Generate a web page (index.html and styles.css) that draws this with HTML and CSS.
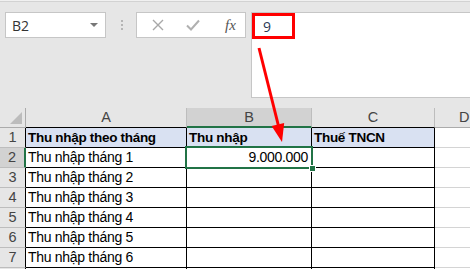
FILE: index.html
```html
<!DOCTYPE html>
<html lang="en">
<head>
    <meta charset="UTF-8">
    <title>Thu nhập</title>
    <link rel="stylesheet" href="styles.css">
</head>
<body>
    <div class="app">
        <div class="topline"></div>
        <div class="toolbar">
            <div class="namebox">
                <span>B2</span>
                <span class="drop"></span>
            </div>
            <div class="dots"><i></i><i></i><i></i></div>
            <div class="fbuttons">
                <svg width="12" height="12" viewBox="0 0 12 12"><path d="M1 1L11 11M11 1L1 11" stroke="#a8a8a8" stroke-width="1.4" fill="none"/></svg>
                <svg width="14" height="12" viewBox="0 0 14 12"><path d="M1 6.5L5 10.5L13 1.5" stroke="#b0b0b0" stroke-width="2" fill="none"/></svg>
                <span class="fx">fx</span>
            </div>
            <div class="formula">
                <div class="hl">9</div>
            </div>
        </div>

        <div class="sheet">
            <div class="ch corner"><span class="tri"></span></div>
            <div class="ch">A</div>
            <div class="ch sel">B</div>
            <div class="ch">C</div>
            <div class="ch last">D</div>

            <div class="rh">1</div>
            <div class="c head">Thu nhập theo tháng</div>
            <div class="c head">Thu nhập</div>
            <div class="c head">Thuế TNCN</div>
            <div class="c free"></div>

            <div class="rh sel">2</div>
            <div class="c">Thu nhập tháng 1</div>
            <div class="c num active">9.000.000<span class="handle"></span></div>
            <div class="c"></div>
            <div class="c free"></div>

            <div class="rh">3</div>
            <div class="c">Thu nhập tháng 2</div>
            <div class="c"></div>
            <div class="c"></div>
            <div class="c free"></div>

            <div class="rh">4</div>
            <div class="c">Thu nhập tháng 3</div>
            <div class="c"></div>
            <div class="c"></div>
            <div class="c free"></div>

            <div class="rh">5</div>
            <div class="c">Thu nhập tháng 4</div>
            <div class="c"></div>
            <div class="c"></div>
            <div class="c free"></div>

            <div class="rh">6</div>
            <div class="c">Thu nhập tháng 5</div>
            <div class="c"></div>
            <div class="c"></div>
            <div class="c free"></div>

            <div class="rh">7</div>
            <div class="c">Thu nhập tháng 6</div>
            <div class="c"></div>
            <div class="c"></div>
            <div class="c free"></div>

            <div class="rh"></div>
            <div class="c"></div>
            <div class="c"></div>
            <div class="c"></div>
            <div class="c free"></div>
        </div>

        <svg class="arrow" width="470" height="269" viewBox="0 0 470 269">
            <line x1="259" y1="48" x2="278.5" y2="126" stroke="#ff0000" stroke-width="3"/>
            <polygon points="282,142 271.6,125.9 284.2,122.9" fill="#ff0000"/>
        </svg>
    </div>
</body>
</html>
```

FILE: styles.css
```css
body {
    margin: 0;
    font-family: 'Liberation Sans', Arial, sans-serif;
    background: #fff;
}

.app {
    position: relative;
    width: 470px;
    height: 269px;
    overflow: hidden;
    background: #e6e6e6;
}

.topline {
    height: 1px;
    border-bottom: 1px solid #d2d2d2;
    background: #f0f0f0;
}

.toolbar {
    display: flex;
    align-items: flex-start;
    height: 96px;
    padding: 10px 0 0 5px;
}

.namebox {
    box-sizing: border-box;
    width: 101px;
    height: 26px;
    border: 1px solid #c6c6c6;
    background: #fff;
    display: flex;
    align-items: center;
    justify-content: space-between;
    padding: 0 7px 0 6px;
    font-family: 'Open Sans', sans-serif;
    font-size: 14px;
    color: #333;
}

.drop {
    width: 0;
    height: 0;
    border-left: 4px solid transparent;
    border-right: 4px solid transparent;
    border-top: 4px solid #777;
}

.dots {
    display: flex;
    flex-direction: column;
    gap: 2px;
    margin: 8px 13px 0 15px;
}

.dots i {
    width: 2px;
    height: 2px;
    background: #b5b5b5;
}

.fbuttons {
    box-sizing: border-box;
    width: 110px;
    height: 26px;
    border: 1px solid #c6c6c6;
    background: #fff;
    display: flex;
    align-items: center;
    padding: 0 8px 0 15px;
    gap: 22px;
}

.fx {
    font-family: 'Liberation Serif', serif;
    font-style: italic;
    font-size: 15px;
    color: #555;
    margin-left: 3px;
}

.formula {
    box-sizing: border-box;
    flex: 1;
    height: 86px;
    margin-left: 5px;
    border: 1px solid #c6c6c6;
    border-right: none;
    background: #fff;
}

.hl {
    box-sizing: border-box;
    width: 43px;
    height: 26px;
    border: 3px solid #ff0000;
    padding: 3px 0 0 8px;
    font-family: 'Open Sans', sans-serif;
    font-size: 14px;
    color: #2b3a55;
    line-height: 16px;
}

.sheet {
    display: grid;
    grid-template-columns: 26px 161px 125px 123px 1fr;
    grid-template-rows: 20px repeat(8, 20px);
    font-size: 14px;
    letter-spacing: -0.3px;
    color: #000;
}

.ch {
    box-sizing: border-box;
    border-right: 1px solid #bdbdbd;
    border-bottom: 1px solid #000;
    background: #e6e6e6;
    color: #444;
    text-align: center;
    line-height: 19px;
    font-size: 14.5px;
    letter-spacing: 0;
}

.ch.last {
    border-bottom-color: #ababab;
    border-right: none;
    text-align: left;
    padding-left: 24px;
}

.ch.corner {
    position: relative;
    border-right-color: #ababab;
    border-bottom-color: #ababab;
}

.tri {
    position: absolute;
    right: 3px;
    bottom: 3px;
    width: 0;
    height: 0;
    border-left: 12px solid transparent;
    border-bottom: 12px solid #bcbcbc;
}

.ch.sel {
    background: #d2d2d2;
    border-bottom: 2px solid #217346;
    line-height: 18px;
}

.rh {
    box-sizing: border-box;
    border-right: 1px solid #000;
    border-bottom: 1px solid #bdbdbd;
    background: #e6e6e6;
    color: #444;
    text-align: center;
    line-height: 19px;
    font-size: 14.5px;
    letter-spacing: 0;
}

.rh.sel {
    background: #d2d2d2;
    border-right: 2px solid #217346;
}

.c {
    box-sizing: border-box;
    border-right: 1px solid #000;
    border-bottom: 1px solid #000;
    background: #fff;
    padding-left: 2px;
    line-height: 19px;
    white-space: nowrap;
}

.c.head {
    background: #d9e1f2;
    font-weight: bold;
    font-size: 13.5px;
}

.c.free {
    border-right: none;
    border-bottom-color: #d4d4d4;
}

.c.num {
    text-align: right;
    padding-right: 3px;
}

.c.active {
    position: relative;
}

.c.active::before {
    content: "";
    position: absolute;
    left: -2px;
    top: -2px;
    right: -2px;
    bottom: -2px;
    border: 2px solid #217346;
}

.handle {
    position: absolute;
    right: -5px;
    bottom: -5px;
    width: 5px;
    height: 5px;
    background: #217346;
    border: 1px solid #fff;
}

.arrow {
    position: absolute;
    left: 0;
    top: 0;
}
```
